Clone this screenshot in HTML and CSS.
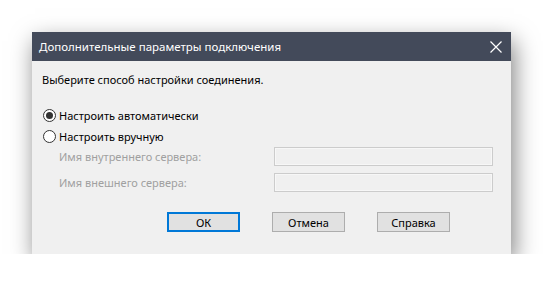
FILE: index.html
```html
<!DOCTYPE html>
<html lang="ru">
<head>
<meta charset="utf-8">
<title>Дополнительные параметры подключения</title>
<link rel="stylesheet" href="styles.css">
</head>
<body>
<div class="dialog">
  <div class="titlebar">
    <span class="title">Дополнительные параметры подключения</span>
    <svg class="close" width="12" height="12" viewBox="0 0 12 12"><path d="M0.5 0.5 L11.5 11.5 M11.5 0.5 L0.5 11.5" stroke="#ffffff" stroke-width="1.2" fill="none"/></svg>
  </div>
  <div class="body">
    <div class="prompt">Выберите способ настройки соединения.</div>
    <div class="radios">
      <div class="radio-row"><span class="radio checked"></span><span>Настроить автоматически</span></div>
      <div class="radio-row"><span class="radio"></span><span>Настроить вручную</span></div>
    </div>
    <div class="fields">
      <div class="field"><span class="label">Имя внутреннего сервера:</span><span class="input"></span></div>
      <div class="field"><span class="label">Имя внешнего сервера:</span><span class="input"></span></div>
    </div>
    <div class="buttons">
      <span class="btn default">ОК</span>
      <span class="btn">Отмена</span>
      <span class="btn">Справка</span>
    </div>
  </div>
</div>
</body>
</html>
```
FILE: styles.css
```css
html, body {
  margin: 0;
  padding: 0;
  background: #ffffff;
}
body {
  padding: 32px 0 0 32px;
  font-family: "Noto Sans", "Open Sans", sans-serif;
  font-size: 11px;
  color: #000;
}
.dialog {
  width: 479px;
  height: 222px;
  background: #f0f0f0;
  box-shadow: 3px 9px 22px rgba(0,0,0,0.5);
  display: flex;
  flex-direction: column;
}
.titlebar {
  height: 29px;
  background: #434a5a;
  color: #ffffff;
  display: flex;
  align-items: center;
  justify-content: space-between;
  padding: 0 9px 0 7px;
}
.title {
  font-size: 11.5px;
}
.body {
  padding: 11px 18px 0 10px;
  display: flex;
  flex-direction: column;
}
.prompt {
  height: 16px;
  line-height: 16px;
}
.radios {
  margin-top: 17px;
  display: flex;
  flex-direction: column;
  gap: 1px;
}
.radio-row {
  height: 20px;
  display: flex;
  align-items: center;
  gap: 3px;
  padding-left: 1px;
}
.radio {
  width: 11px;
  height: 11px;
  border: 1px solid #333333;
  border-radius: 50%;
  background: #ffffff;
  display: flex;
  align-items: center;
  justify-content: center;
}
.radio.checked::after {
  content: "";
  width: 7px;
  height: 7px;
  border-radius: 50%;
  background: #333333;
}
.fields {
  margin-top: 1px;
  display: flex;
  flex-direction: column;
  gap: 7px;
}
.field {
  height: 19px;
  display: flex;
  align-items: center;
  justify-content: space-between;
  padding-left: 17px;
}
.label {
  color: #a0a0a0;
}
.input {
  width: 217px;
  height: 17px;
  border: 1px solid #cccccc;
  box-shadow: inset 0 0 0 1px #f7f7f7;
  background: #f0f0f0;
  box-sizing: content-box;
}
.buttons {
  margin-top: 20px;
  display: flex;
  justify-content: flex-end;
  gap: 32px;
  padding-right: 43px;
}
.btn {
  width: 71px;
  height: 18px;
  border: 1px solid #adadad;
  background: #e1e1e1;
  display: flex;
  align-items: center;
  justify-content: center;
}
.btn.default {
  width: 69px;
  height: 16px;
  border: 2px solid #0078d7;
}
```
